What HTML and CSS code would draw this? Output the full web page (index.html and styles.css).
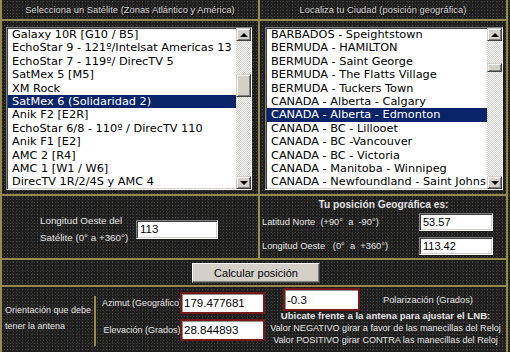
FILE: index.html
```html
<!DOCTYPE html>
<html lang="es">
<head>
    <meta charset="UTF-8">
    <title>Posición de la antena</title>
    <link rel="stylesheet" href="styles.css">
</head>
<body>
    <div class="frame">
        <div class="top">
            <div class="col col-sat">
                <div class="cap">Selecciona un Satélite (Zonas Atlántico y América)</div>
                <div class="list-area">
                    <div class="listbox">
                        <div class="items">
                            <div class="item">Galaxy 10R [G10 / B5]</div>
                            <div class="item">EchoStar 9 - 121º/Intelsat Americas 13</div>
                            <div class="item">EchoStar 7 - 119º/ DirecTV 5</div>
                            <div class="item">SatMex 5 [M5]</div>
                            <div class="item">XM Rock</div>
                            <div class="item sel">SatMex 6 (Solidaridad 2)</div>
                            <div class="item">Anik F2 [E2R]</div>
                            <div class="item">EchoStar 6/8 - 110º / DirecTV 110</div>
                            <div class="item">Anik F1 [E2]</div>
                            <div class="item">AMC 2 [R4]</div>
                            <div class="item">AMC 1 [W1 / W6]</div>
                            <div class="item">DirecTV 1R/2/4S y AMC 4</div>
                        </div>
                        <div class="scroll">
                            <div class="sbtn"><span class="arrow-up"></span></div>
                            <div class="track"><div class="thumb thumb-sat"></div></div>
                            <div class="sbtn"><span class="arrow-down"></span></div>
                        </div>
                    </div>
                </div>
            </div>
            <div class="col col-city">
                <div class="cap">Localiza tu Ciudad (posición geográfica)</div>
                <div class="list-area">
                    <div class="listbox">
                        <div class="items">
                            <div class="item">BARBADOS - Speightstown</div>
                            <div class="item">BERMUDA - HAMILTON</div>
                            <div class="item">BERMUDA - Saint George</div>
                            <div class="item">BERMUDA - The Flatts Village</div>
                            <div class="item">BERMUDA - Tuckers Town</div>
                            <div class="item">CANADA - Alberta - Calgary</div>
                            <div class="item sel">CANADA - Alberta - Edmonton</div>
                            <div class="item">CANADA - BC - Lillooet</div>
                            <div class="item">CANADA - BC -Vancouver</div>
                            <div class="item">CANADA - BC - Victoria</div>
                            <div class="item">CANADA - Manitoba - Winnipeg</div>
                            <div class="item">CANADA - Newfoundland - Saint Johns</div>
                        </div>
                        <div class="scroll">
                            <div class="sbtn"><span class="arrow-up"></span></div>
                            <div class="track"><div class="thumb thumb-city"></div></div>
                            <div class="sbtn"><span class="arrow-down"></span></div>
                        </div>
                    </div>
                </div>
            </div>
        </div>

        <div class="coords">
            <div class="coord-left">
                <div class="lbl-lon">Longitud Oeste del<br>Satélite (0° a +360°)</div>
                <input class="field field-lon" type="text" value="113">
            </div>
            <div class="coord-right">
                <div class="geo-title">Tu posición Geográfica es:</div>
                <div class="geo-row">
                    <span>Latitud Norte&nbsp; (+90° &nbsp;a &nbsp;-90°)</span>
                    <input class="field field-geo" type="text" value="53.57">
                </div>
                <div class="geo-row">
                    <span>Longitud Oeste &nbsp;&nbsp;(0° &nbsp;a &nbsp;+360°)</span>
                    <input class="field field-geo" type="text" value="113.42">
                </div>
            </div>
        </div>

        <div class="calc">
            <button class="btn-calc" type="button">Calcular posición</button>
        </div>

        <div class="result">
            <div class="orient">Orientación que debe<br>tener la antena</div>
            <div class="vsep"></div>
            <div class="dir">
                <div class="dir-lbl">Azimut (Geográfico)</div>
                <input class="field field-red" type="text" value="179.477681">
                <div class="dir-lbl">Elevación (Grados)</div>
                <input class="field field-red" type="text" value="28.844893">
            </div>
            <div class="pol">
                <div class="pol-top">
                    <input class="field field-red field-pol" type="text" value="-0.3">
                    <span class="pol-lbl">Polarización (Grados)</span>
                </div>
                <div class="pol-note">
                    <div class="pol-head">Ubicate frente a la antena para ajustar el LNB:</div>
                    <div>Valor NEGATIVO girar a favor de las manecillas del Reloj</div>
                    <div>Valor POSITIVO girar CONTRA las manecillas del Reloj</div>
                </div>
            </div>
        </div>
    </div>
</body>
</html>
```

FILE: styles.css
```css
body {
    margin: 0;
    background-color: #1f1f1f;
    background-image:
        radial-gradient(circle, rgba(255, 255, 255, 0.16) 0.5px, transparent 1px),
        radial-gradient(circle, rgba(170, 160, 110, 0.14) 0.5px, transparent 1px),
        radial-gradient(circle, rgba(0, 0, 0, 0.45) 0.6px, transparent 1px);
    background-size: 3px 3px, 5px 4px, 7px 5px;
    font-family: "Liberation Sans", Arial, sans-serif;
    font-size: 9.3px;
    color: #e4e4e4;
}

.frame {
    width: 504px;
    height: 352px;
    border-left: 2px solid #958b4c;
    border-right: 2px solid #958b4c;
    overflow: hidden;
}

.top {
    display: flex;
    border-bottom: 2px solid #958b4c;
}

.col-sat {
    width: 256px;
    border-right: 2px solid #958b4c;
}

.col-city {
    flex: 1;
}

.cap {
    height: 19px;
    line-height: 20px;
    border-bottom: 2px solid #958b4c;
    text-align: center;
    font-size: 9.4px;
    color: #d8d8d8;
    text-shadow: 1px 1px 1px #000;
    white-space: nowrap;
}

.list-area {
    height: 167px;
    padding-top: 6px;
}

.listbox {
    display: flex;
    height: 163px;
    box-sizing: border-box;
    background: #fff;
    border: 1px solid;
    border-color: #808080 #fff #fff #808080;
    box-shadow: inset 1px 1px 0 #404040, inset -1px -1px 0 #d4d0c8;
    padding: 0 0 0 1px;
}

.col-sat .listbox {
    margin-left: 4px;
    width: 246px;
}

.col-city .listbox {
    margin-left: 5px;
    width: 238px;
}

.items {
    flex: 1;
    overflow: hidden;
    font-family: "DejaVu Sans", Verdana, sans-serif;
    font-size: 11.3px;
    line-height: 13.4px;
    color: #000;
}

.item {
    padding-left: 4px;
    white-space: nowrap;
}

.item.sel {
    background: #0a246a;
    color: #fff;
}

.scroll {
    width: 15px;
    display: flex;
    flex-direction: column;
}

.sbtn,
.thumb {
    box-sizing: border-box;
    background: #d4d0c8;
    border: 1px solid;
    border-color: #d4d0c8 #404040 #404040 #d4d0c8;
    box-shadow: inset 1px 1px 0 #fff, inset -1px -1px 0 #808080;
}

.sbtn {
    height: 13px;
    display: flex;
    align-items: center;
    justify-content: center;
}

.arrow-up,
.arrow-down {
    width: 0;
    height: 0;
    border: 4px solid transparent;
}

.arrow-up {
    border-top: 0;
    border-bottom: 4px solid #000;
}

.arrow-down {
    border-bottom: 0;
    border-top: 4px solid #000;
}

.track {
    flex: 1;
    background: repeating-conic-gradient(#d4d0c8 0 25%, #fff 0 50%) 0 0 / 2px 2px;
}

.thumb-sat {
    margin-top: 33px;
    height: 23px;
}

.thumb-city {
    margin-top: 22px;
    height: 9px;
}

.field {
    box-sizing: border-box;
    margin: 0;
    padding: 0 3px;
    background: #fff;
    border: 1px solid;
    border-color: #808080 #fff #fff #808080;
    box-shadow: inset 1px 1px 0 #404040, inset -1px -1px 0 #d4d0c8;
    font-family: "Liberation Sans", Arial, sans-serif;
    font-size: 11.5px;
    color: #000;
    outline: none;
}

.coords {
    display: flex;
    height: 62px;
    border-bottom: 2px solid #958b4c;
}

.coord-left {
    width: 218px;
    padding: 4px 0 0 38px;
    border-right: 2px solid #958b4c;
    display: flex;
    align-items: center;
}

.lbl-lon {
    width: 92px;
    font-size: 9.8px;
    line-height: 17px;
    white-space: nowrap;
}

.field-lon {
    width: 82px;
    height: 19px;
    margin-left: 4px;
}

.coord-right {
    flex: 1;
    padding: 2px 13px 0 2px;
}

.geo-title {
    padding-left: 12px;
    text-align: center;
    font-weight: bold;
    font-size: 10.2px;
    line-height: 14px;
    white-space: nowrap;
}

.geo-row {
    display: flex;
    justify-content: space-between;
    align-items: center;
    height: 18px;
    margin-top: 1px;
    white-space: nowrap;
}

.geo-row + .geo-row {
    margin-top: 6px;
}

.field-geo {
    width: 74px;
    height: 18px;
    font-size: 11px;
}

.calc {
    height: 27px;
    box-sizing: border-box;
    padding: 3px 0 0 4px;
    border-bottom: 2px solid #958b4c;
    display: flex;
    justify-content: center;
}

.btn-calc {
    width: 128px;
    height: 20px;
    padding: 0;
    background: #d4d0c8;
    border: 1px solid;
    border-color: #fff #404040 #404040 #fff;
    box-shadow: inset -1px -1px 0 #808080;
    font-family: "Liberation Sans", Arial, sans-serif;
    font-size: 11px;
    color: #000;
}

.result {
    display: flex;
    align-items: flex-start;
    height: 63px;
}

.orient {
    width: 87px;
    padding: 15px 0 0 3px;
    font-size: 9px;
    line-height: 16px;
    white-space: nowrap;
}

.vsep {
    width: 2px;
    height: 50px;
    margin: 9px 0 0 2px;
    background: #958b4c;
}

.dir {
    display: grid;
    grid-template-columns: 84px 85px;
    grid-auto-rows: 22px;
    row-gap: 5px;
    margin-top: 5px;
}

.dir-lbl {
    margin-right: -8px;
    font-size: 9px;
    line-height: 22px;
    text-align: center;
    white-space: nowrap;
}

.field-red {
    border: 2px solid #761818;
    box-shadow: inset 1px 1px 0 #909090;
    font-size: 11.5px;
    padding: 0 2px;
}

.pol {
    flex: 1;
    padding-top: 1px;
}

.pol-top {
    display: flex;
    align-items: center;
    height: 23px;
    padding-left: 18px;
}

.field-pol {
    width: 77px;
    height: 23px;
}

.pol-lbl {
    margin-left: 23px;
    white-space: nowrap;
}

.pol-note {
    margin-top: -1px;
    text-align: center;
    font-size: 9.1px;
    line-height: 12px;
    white-space: nowrap;
}

.pol-head {
    font-weight: bold;
    font-size: 9.6px;
}
```
